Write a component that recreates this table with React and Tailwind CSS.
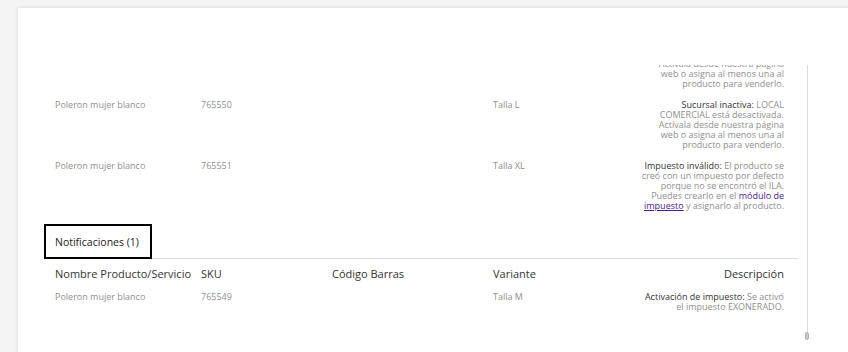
import React from "react";

const font = { fontFamily: '"Open Sans", "Noto Sans", sans-serif' };

const Sucursal = () => (
  <>
    <span className="font-medium text-[#333]">Sucursal inactiva:</span> LOCAL
    <br />
    COMERCIAL está desactivada.
    <br />
    Actívala desde nuestra página
    <br />
    web o asigna al menos una al
    <br />
    producto para venderlo.
  </>
);

const Impuesto = () => (
  <>
    <span className="font-medium text-[#333]">Impuesto inválido:</span> El producto se
    <br />
    creó con un impuesto por defecto
    <br />
    porque no se encontró el ILA.
    <br />
    Puedes crearlo en el{" "}
    <a className="font-medium text-[#4a1a94]">módulo de</a>
    <br />
    <a className="font-medium text-[#4a1a94] underline">impuesto</a> y asignarlo al producto.
  </>
);

const Activacion = () => (
  <>
    <span className="font-medium text-[#333]">Activación de impuesto:</span> Se activó
    <br />
    el impuesto EXONERADO.
  </>
);

const errorRows = [
  { name: "Poleron mujer blanco", sku: "765549", variant: "Talla M", desc: <Sucursal /> },
  { name: "Poleron mujer blanco", sku: "765550", variant: "Talla L", desc: <Sucursal /> },
  { name: "Poleron mujer blanco", sku: "765551", variant: "Talla XL", desc: <Impuesto /> },
];

const notifRows = [
  { name: "Poleron mujer blanco", sku: "765549", barcode: "", variant: "Talla M", desc: <Activacion /> },
];

const cols = "grid grid-cols-[146px_131px_161px_1fr_auto] pl-[11px] pr-[14px]";

export default function App() {
  return (
    <div
      className="w-[848px] h-[352px] overflow-hidden bg-[#f5f4f4] pt-[8px] pl-[18px]"
      style={font}
    >
      <div className="h-[400px] w-[860px] bg-white shadow-[0_0_4px_rgba(0,0,0,0.12)] pt-[57px]">
        <div className="flex h-[275px]">
          <div className="ml-[26px] w-[754px] overflow-hidden">
            <div className="-mt-[32px]">
              {errorRows.map((r, i) => (
                <div
                  key={i}
                  className={`${cols} pt-[6px] pb-[5px] text-[9px] leading-[10px] text-[#8f8f8f]`}
                >
                  <div>{r.name}</div>
                  <div>{r.sku}</div>
                  <div></div>
                  <div>{r.variant}</div>
                  <div className="text-right">{r.desc}</div>
                </div>
              ))}

              <div className="mt-[8px] flex border-b border-[#dedede]">
                <div className="-mb-px h-[35px] border-2 border-black pl-[9px] pr-[11px] flex items-center pt-[2px] text-[10.5px] text-[#222]">
                  Notificaciones (1)
                </div>
              </div>

              <div className={`${cols} pt-[8px] pb-[5px] text-[11px] leading-[14px] text-[#333]`}>
                <div>Nombre Producto/Servicio</div>
                <div>SKU</div>
                <div>Código Barras</div>
                <div>Variante</div>
                <div className="text-right">Descripción</div>
              </div>
              {notifRows.map((r, i) => (
                <div
                  key={i}
                  className={`${cols} pt-[6px] pb-[5px] text-[9px] leading-[10px] text-[#8f8f8f]`}
                >
                  <div>{r.name}</div>
                  <div>{r.sku}</div>
                  <div>{r.barcode}</div>
                  <div>{r.variant}</div>
                  <div className="text-right">{r.desc}</div>
                </div>
              ))}
            </div>
          </div>

          <div className="ml-[7px] w-[4px] flex flex-col items-center">
            <div className="flex-1 w-px bg-[#dcdcdc]" />
            <div className="h-[8px] w-[4px] rounded-[2px] bg-[#c9c9c9] border border-[#b5b5b5]" />
          </div>
        </div>
      </div>
    </div>
  );
}
